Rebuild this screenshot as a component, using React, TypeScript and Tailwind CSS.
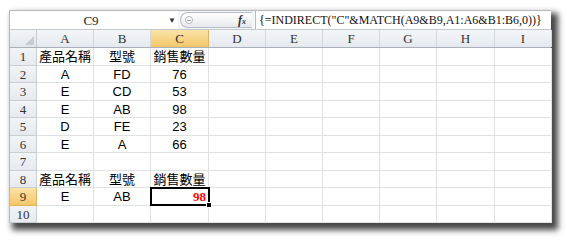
import React from "react";

const cols = [
  { key: "A", w: "w-[57px]" },
  { key: "B", w: "w-[57px]" },
  { key: "C", w: "w-[58px]" },
  { key: "D", w: "w-[57px]" },
  { key: "E", w: "w-[57px]" },
  { key: "F", w: "w-[57px]" },
  { key: "G", w: "w-[57px]" },
  { key: "H", w: "w-[58px]" },
  { key: "I", w: "w-[57px]" },
];

const rows: (string | null)[][] = [
  ["產品名稱", "型號", "銷售數量"],
  ["A", "FD", "76"],
  ["E", "CD", "53"],
  ["E", "AB", "98"],
  ["D", "FE", "23"],
  ["E", "A", "66"],
  [],
  ["產品名稱", "型號", "銷售數量"],
  ["E", "AB", null],
  [],
];

const serif = "font-['Liberation_Serif','Noto_Sans_CJK_TC',serif]";
const cellFont = "font-['Liberation_Sans','Noto_Sans_CJK_TC',sans-serif]";

function FormulaBar() {
  return (
    <div className="flex h-[19px] items-stretch border-b border-[#c3c8cf] bg-[#f3f5f8]">
      <div className="flex w-[168px] shrink-0 items-center bg-white">
        <span className={`${serif} flex-1 text-center text-[13px] leading-none text-[#222] pl-[4px]`}>
          C9
        </span>
        <span className="mr-[2px] text-[8px] leading-none text-[#333]">▼</span>
      </div>
      <div className="flex w-[77px] shrink-0 items-center">
        <div className="ml-[2px] flex h-[16px] w-[72px] items-center rounded-l-full border border-r-0 border-[#b9bec6] bg-gradient-to-b from-white to-[#e6e9ee]">
          <span className="ml-[4px] flex h-[8px] w-[8px] items-center justify-center rounded-full border border-[#b0b5bd] bg-white">
            <span className="h-px w-[4px] bg-[#a0a5ad]" />
          </span>
          <span className="ml-auto mr-[6px] text-[12px] font-bold italic leading-none text-[#333] font-['Liberation_Serif',serif]">
            f<span className="text-[8px]">x</span>
          </span>
        </div>
      </div>
      <div className="flex min-w-0 flex-1 items-center overflow-hidden border-l border-[#b9bec6] bg-white pl-[3px]">
        <span className={`${serif} whitespace-nowrap text-[12px] leading-none text-[#111]`}>
          {'{=INDIRECT("C"&MATCH(A9&B9,A1:A6&B1:B6,0))}'}
        </span>
      </div>
    </div>
  );
}

function HeaderRow() {
  return (
    <div className="flex h-[18px] border-b border-[#a9b0b9]">
      <div className="relative w-[27px] shrink-0 border-r border-[#c6cbd2] bg-gradient-to-b from-[#f2f4f7] to-[#e3e7ec]">
        <div className="absolute bottom-[2px] right-[2px] h-0 w-0 border-l-[9px] border-t-[9px] border-l-transparent border-t-transparent border-b-0 border-r-[9px] border-b-[#c8ccd2] border-r-[#c8ccd2]" />
      </div>
      {cols.map((c) => (
        <div
          key={c.key}
          className={`${c.w} shrink-0 flex items-center justify-center border-r ${
            c.key === "C"
              ? "border-[#e0b65c] bg-gradient-to-b from-[#fbe3a8] to-[#f3c768]"
              : "border-[#d3d7dd] bg-gradient-to-b from-[#f4f6f9] to-[#e5e9ee]"
          } ${serif} text-[13px] leading-none text-[#333]`}
        >
          {c.key}
        </div>
      ))}
    </div>
  );
}

export default function App() {
  return (
    <div className="h-[241px] w-[567px] overflow-hidden bg-white pl-[9px] pt-[10px]">
      <div className="w-[542px] border-t border-l border-[#b4b8be] bg-white shadow-[5px_5px_6px_2px_rgba(0,0,0,0.72)]">
        <FormulaBar />
        <HeaderRow />
        {rows.map((r, i) => {
          const n = i + 1;
          const h = i % 2 === 0 ? "h-[18px]" : "h-[17px]";
          const sel = n === 9;
          return (
            <div key={n} className={`flex ${h}`}>
              <div
                className={`w-[27px] shrink-0 flex items-center justify-center border-r border-b ${serif} text-[13px] leading-none text-[#333] ${
                  sel
                    ? "border-[#e0b65c] bg-gradient-to-b from-[#fbe3a8] to-[#f3c768]"
                    : "border-[#c9ced5] bg-gradient-to-b from-[#f2f4f7] to-[#e6e9ee]"
                }`}
              >
                {n}
              </div>
              {cols.map((c, j) => {
                const v = r[j];
                const isSel = sel && c.key === "C";
                return (
                  <div
                    key={c.key}
                    className={`${c.w} shrink-0 relative flex items-center justify-center border-r border-b border-[#dfe1e3] ${cellFont} text-[13px] leading-none text-black`}
                  >
                    {isSel ? (
                      <div className="absolute -left-px -top-px z-10 flex h-[19px] w-[60px] items-center justify-end border-2 border-black pr-[2px]">
                        <span className="font-['Liberation_Serif',serif] text-[13px] font-bold leading-none text-[#ff0000]">
                          98
                        </span>
                        <div className="absolute -bottom-[4px] -right-[4px] h-[6px] w-[6px] border border-white bg-black" />
                      </div>
                    ) : (
                      v
                    )}
                  </div>
                );
              })}
            </div>
          );
        })}
      </div>
    </div>
  );
}
